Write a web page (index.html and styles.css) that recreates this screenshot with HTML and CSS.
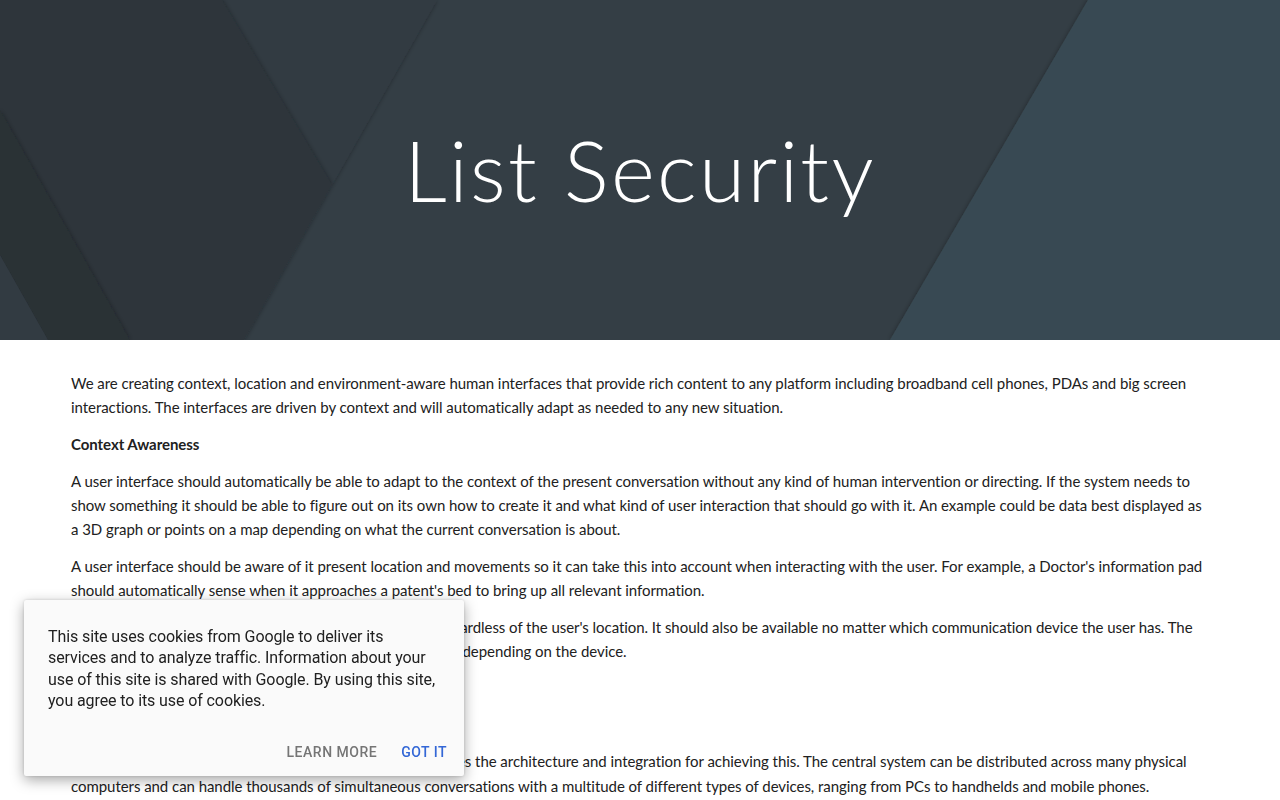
FILE: index.html
```html
<!DOCTYPE html>
<html lang="en">
<head>
<meta charset="utf-8">
<title>List Security</title>
<link rel="stylesheet" href="styles.css">
</head>
<body>
<header class="hero">
  <svg class="hero-bg" viewBox="0 0 1280 340" preserveAspectRatio="none" aria-hidden="true">
    <defs>
      <filter id="sh" x="-10%" y="-10%" width="120%" height="120%">
        <feDropShadow dx="0" dy="0" stdDeviation="2.5" flood-color="#000" flood-opacity="0.35"/>
      </filter>
    </defs>
    <rect x="0" y="0" width="1280" height="340" fill="#343e45"/>
    <polygon points="1088,0 1280,0 1280,340 890,340" fill="#394a53" filter="url(#sh)"/>
    <polygon points="222,0 437,0 332,185" fill="#323b42" filter="url(#sh)"/>
    <polygon points="0,0 222,0 332,185 244,340 0,340" fill="#2d353b" filter="url(#sh)"/>
    <polygon points="0,110 130,340 48,340 0,255" fill="#293034" filter="url(#sh)"/>
    <polygon points="0,255 48,340 0,340" fill="#323b42"/>
  </svg>
  <h1 class="hero-title">List Security</h1>
</header>

<main class="content">
  <p>We are creating context, location and environment-aware human interfaces that provide rich content to any platform including broadband cell phones, PDAs and big screen interactions. The interfaces are driven by context and will automatically adapt as needed to any new situation.</p>
  <p class="heading">Context Awareness</p>
  <p>A user interface should automatically be able to adapt to the context of the present conversation without any kind of human intervention or directing. If the system needs to show something it should be able to figure out on its own how to create it and what kind of user interaction that should go with it. An example could be data best displayed as a 3D graph or points on a map depending on what the current conversation is about.</p>
  <p>A user interface should be aware of it present location and movements so it can take this into account when interacting with the user. For example, a Doctor's information pad should automatically sense when it approaches a patent's bed to bring up all relevant information.</p>
  <p>The user interface should also be accessible everywhere regardless of the user's location. It should also be available no matter which communication device the user has. The presentation and the interaction should automatically adapt depending on the device.</p>
  <p class="heading">Architecture</p>
  <p>The central system.</p>
  <p>Our ubiquitous human interface server platform also provides the architecture and integration for achieving this. The central system can be distributed across many physical computers and can handle thousands of simultaneous conversations with a multitude of different types of devices, ranging from PCs to handhelds and mobile phones.</p>
</main>

<div class="cookie">
  <p class="cookie-text">This site uses cookies from Google to deliver its services and to analyze traffic. Information about your use of this site is shared with Google. By using this site, you agree to its use of cookies.</p>
  <div class="cookie-actions">
    <span class="btn btn-learn">LEARN MORE</span>
    <span class="btn btn-got">GOT IT</span>
  </div>
</div>
</body>
</html>
```

FILE: styles.css
```css
html, body {
  margin: 0;
  padding: 0;
  background: #ffffff;
}

body {
  font-family: "Lato", "Liberation Sans", sans-serif;
  color: #212121;
}

.hero {
  position: relative;
  height: 340px;
  display: flex;
  align-items: center;
  justify-content: center;
  overflow: hidden;
  background: #343e45;
}

.hero-bg {
  position: absolute;
  top: 0;
  left: 0;
  width: 100%;
  height: 100%;
}

.hero-title {
  position: relative;
  margin: 0;
  font-family: "Lato", sans-serif;
  font-weight: 300;
  font-size: 84px;
  line-height: 1.2;
  letter-spacing: 2.3px;
  color: #ffffff;
}

.content {
  padding: 31px 71px 40px;
  font-size: 15px;
  line-height: 24.4px;
  letter-spacing: -0.05px;
}

.content p {
  margin: 0 0 12.2px;
}

.content .heading {
  font-weight: 700;
}

.cookie {
  position: fixed;
  left: 24px;
  top: 600px;
  width: 440px;
  height: 176px;
  box-sizing: border-box;
  background: #fafafa;
  box-shadow: 0 4px 14px rgba(0, 0, 0, 0.35), 0 0 3px rgba(0, 0, 0, 0.15);
  border-radius: 2px;
  padding: 26px 17px 16px 24px;
  display: flex;
  flex-direction: column;
  justify-content: space-between;
  font-family: "Roboto", "Liberation Sans", sans-serif;
}

.cookie-text {
  margin: 0;
  padding-right: 6px;
  font-size: 16px;
  line-height: 21.4px;
  letter-spacing: -0.1px;
  color: #212121;
}

.cookie-actions {
  display: flex;
  justify-content: flex-end;
  gap: 24px;
}

.btn {
  font-size: 14px;
  font-weight: 500;
  letter-spacing: 0.5px;
  line-height: 16px;
}

.btn-learn {
  color: #757575;
}

.btn-got {
  color: #3367d6;
}
```
